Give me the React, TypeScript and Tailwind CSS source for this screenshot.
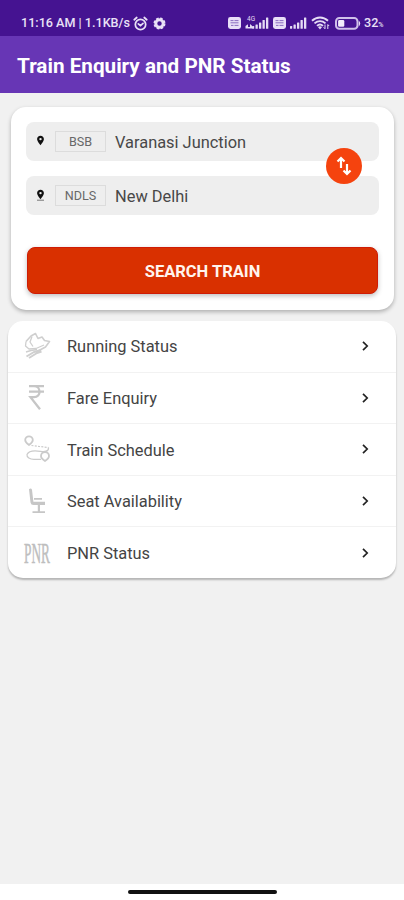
import React, { useState } from "react";

type Station = { code: string; name: string };

// ── Status bar icons ──

function AlarmIcon() {
  return (
    <svg width="15" height="15" viewBox="0 0 24 24" fill="none" stroke="currentColor" strokeWidth="2.8" strokeLinecap="round">
      <circle cx="12" cy="13.5" r="8.3" />
      <path d="M2 6l4-3.6M22 6l-4-3.6M8.5 12.5l3.5 2.8 4-3.6" />
    </svg>
  );
}

function GearIcon() {
  return (
    <svg width="13" height="13" viewBox="0 0 24 24" fill="none" stroke="currentColor">
      <circle cx="12" cy="12" r="6.8" strokeWidth="5.4" />
      <circle cx="12" cy="12" r="9.8" strokeWidth="2.6" strokeDasharray="4.9 2.8" />
    </svg>
  );
}

function VolteIcon() {
  return (
    <svg width="13" height="12" viewBox="0 0 13 12">
      <rect width="13" height="12" rx="2.4" fill="#e8dff7" />
      <path d="M2.5 3.6h3M6.5 3.6h4M2.5 5.8h8M3 8.4h2.5M6.5 8.4h4" stroke="#8a6dc0" strokeWidth="1" />
    </svg>
  );
}

function SignalIcon({ network }: { network?: string }) {
  return (
    <svg width={network ? 25 : 19} height="14" viewBox={network ? "0 0 25 14" : "6 0 19 14"} fill="#e5dcf5">
      {network && (
        <>
          <text x="2" y="5.2" fontSize="6.5" fontFamily="Roboto, sans-serif">{network}</text>
          <path d="M.5 12.5V10l2.5-1.8V11h2V8l2 1.8v2.7z" />
        </>
      )}
      <rect x="7" y="10" width="2.2" height="2.8" rx=".5" />
      <rect x="10.5" y="8.5" width="2.3" height="4.3" rx=".5" />
      <rect x="14" y="6.5" width="2.3" height="6.3" rx=".5" />
      <rect x="17.5" y="4" width="2.3" height="8.8" rx=".5" />
      <rect x="21" y="1.5" width="2.3" height="11.3" rx=".5" />
    </svg>
  );
}

function WifiIcon() {
  return (
    <svg width="19" height="14" viewBox="0 0 19 14" fill="none" stroke="#e5dcf5" strokeWidth="1.9">
      <path d="M1 4.8C5.7.4 12.3.4 17 4.8M3.5 7.4c3.3-3 7.7-3 11 0M6 9.9c1.8-1.6 4.2-1.6 6 0" />
      <path d="M9 13.4L6.9 11q2.1-1.5 4.2 0z" fill="#e5dcf5" stroke="none" />
      <path d="M14 8.5v4.2M12.6 11.3l1.4 1.5M16.8 13V8.6M18.1 10l-1.3-1.5" strokeWidth="1" />
    </svg>
  );
}

function BatteryIcon() {
  return (
    <svg width="26" height="13" viewBox="0 0 26 13">
      <rect x="1" y="1" width="21.5" height="10.8" rx="3.4" fill="none" stroke="#cfc0ea" strokeWidth="2" />
      <rect x="3.1" y="3" width="6.2" height="6.8" rx="1.3" fill="#f3edfc" />
      <path d="M23.8 3.4q2.8 3 0 6z" fill="#e5dcf5" />
    </svg>
  );
}

function StatusBar() {
  return (
    <div className="flex h-9 shrink-0 bg-[#451391] pl-[21px] pr-5 pt-[10px] text-[#e9e1f6]">
      <div className="flex h-[26px] items-center">
        <span className="w-[109px] whitespace-nowrap pt-px text-[12.6px] font-medium">11:16 AM | 1.1KB/s</span>
        <span className="ml-[3px]"><AlarmIcon /></span>
        <span className="ml-[5px]"><GearIcon /></span>
      </div>
      <div className="ml-auto flex h-[26px] items-center">
        <VolteIcon />
        <span className="ml-[4px]"><SignalIcon network="4G" /></span>
        <span className="ml-[3px]"><VolteIcon /></span>
        <span className="ml-[3px]"><SignalIcon /></span>
        <span className="ml-[3px]"><WifiIcon /></span>
        <span className="ml-[5px]"><BatteryIcon /></span>
        <span className="ml-[3px] w-[20px] whitespace-nowrap pt-px text-[12.6px] font-medium">32<span className="text-[7px]">%</span></span>
      </div>
    </div>
  );
}

// ── Search card ──

function PinIcon({ underline }: { underline?: boolean }) {
  return (
    <svg width="9" height="12" viewBox="0 0 9 12" className="shrink-0">
      <path
        fillRule="evenodd"
        d="M4.5.8C2.5.8 1.1 2.2 1.1 4.1c0 2.3 3.4 6.1 3.4 6.1s3.4-3.8 3.4-6.1C7.9 2.2 6.5.8 4.5.8zm0 2.1a1.2 1.2 0 110 2.4 1.2 1.2 0 010-2.4z"
        fill="#111"
      />
      {underline && <path d="M1 11.2h7" stroke="#777" strokeWidth="1" />}
    </svg>
  );
}

function StationRow({ station, underline }: { station: Station; underline?: boolean }) {
  return (
    <div className="flex h-[38.5px] items-center rounded-lg bg-[#eee] pl-[10px]">
      <PinIcon underline={underline} />
      <span className="ml-[10px] flex h-[21px] w-[51px] items-center justify-center border border-[#dcdcdc] pt-[2px] text-[12.6px] text-[#686868]">
        {station.code}
      </span>
      <span className="ml-[9px] pt-[3px] text-[16.4px] leading-5 text-[#484848]">{station.name}</span>
    </div>
  );
}

function SearchCard() {
  const [stations, setStations] = useState<Station[]>([
    { code: "BSB", name: "Varanasi Junction" },
    { code: "NDLS", name: "New Delhi" },
  ]);

  return (
    <div className="ml-[11px] mr-[10px] h-[203px] rounded-[15px] bg-white px-[15px] pt-[15px] shadow-[0_2px_4px_rgba(0,0,0,0.28)]">
      <div className="relative space-y-[15.5px]">
        <StationRow station={stations[0]} />
        <StationRow station={stations[1]} underline />
        <button
          onClick={() => setStations([stations[1], stations[0]])}
          aria-label="Swap stations"
          className="absolute right-[17px] top-[26px] flex size-9 items-center justify-center rounded-full bg-[#f5430e]"
        >
          <svg width="16" height="20" viewBox="0 0 16 20" fill="none" stroke="#fff" strokeWidth="2.2">
            <path d="M5 12V3M1.5 5.5L5 2l3.5 3.5M11 8v9M7.5 14.5L11 18l3.5-3.5" />
          </svg>
        </button>
      </div>
      <button className="ml-px mt-[32.5px] flex h-[47px] w-[351px] items-center justify-center rounded-lg border border-[#cf1c05] bg-[#d93000] pt-[3px] text-[16.5px] font-bold text-[#fff4ee] shadow-[0_2px_5px_rgba(0,0,0,0.25)]">
        SEARCH TRAIN
      </button>
    </div>
  );
}

// ── Menu ──

function TrainIcon() {
  return (
    <svg width="28" height="28" viewBox="0 0 28 28" fill="none" stroke="#cfcfcf" strokeWidth="1.6" strokeLinejoin="round">
      <path d="M3 9.5L8 4l4.5-2.5 2.5 5 4-1.5 2.5 3.5 5 1-4 5.5-6.5 3.5" />
      <path d="M3 9.5l-.5 4.5 3.5 3 7-.5 8-3.5M9 4.5L7 10l3 4.5" strokeWidth="1.3" />
      <path d="M3 20l5-1.5 6-1" strokeWidth="1.6" />
      <path d="M3.5 24.5L11 20l7-2M6 26l8-5 4.5-1.5" strokeWidth="2" />
    </svg>
  );
}

function RupeeIcon() {
  return (
    <svg width="28" height="28" viewBox="0 0 28 28" fill="none" stroke="#c6c6c6" strokeWidth="2.3">
      <path d="M6 2.2h15M6 7.6h15M6.5 2.2H11c7.4 0 7.4 11 0 11H7.5l9.5 12" />
    </svg>
  );
}

function RouteIcon() {
  return (
    <svg width="28" height="28" viewBox="0 0 28 28" fill="none" stroke="#cbcbcb" strokeWidth="1.8">
      <path d="M6 10S2.2 7.5 2.2 5.1a3.8 3.8 0 017.6 0C9.8 7.5 6 10 6 10z" />
      <path d="M8.5 10.5l8 1 9 1" strokeDasharray="2 1.3" strokeWidth="1.2" />
      <path d="M25.5 12.5c.5 4-4 4.5-8 3.8-6-1-12-.3-13.5 3.2-.5 3 3 4.8 7 4.8h7" strokeWidth="1.2" />
      <path d="M22 26s-4-2.6-4-5a4 4 0 018 0c0 2.4-4 5-4 5z" />
    </svg>
  );
}

function SeatIcon() {
  return (
    <svg width="28" height="28" viewBox="0 0 28 28" fill="#c6c6c6">
      <path d="M6 2.2q2-1.5 3 .5l1.4 12.1H22v3.2H10.5q-2.6 0-3-2.6z" />
      <path d="M11 11h8v1.7h-8zM14.8 18h2.2v6.5h-2.2zM9.5 24.3h12.5V26H9.5z" />
    </svg>
  );
}

function PnrIcon() {
  return (
    <svg width="28" height="36" viewBox="0 0 28 36" fill="#bebebe" stroke="#bebebe" strokeWidth="0.5">
      <text transform="translate(1 27.5) scale(0.46 1)" fontSize="29" fontFamily="'Liberation Serif', serif">PNR</text>
    </svg>
  );
}

const MENU = [
  { label: "Running Status", icon: <TrainIcon /> },
  { label: "Fare Enquiry", icon: <RupeeIcon /> },
  { label: "Train Schedule", icon: <RouteIcon /> },
  { label: "Seat Availability", icon: <SeatIcon /> },
  { label: "PNR Status", icon: <PnrIcon /> },
];

function MenuCard() {
  return (
    <div className="ml-2 mr-2 mt-[11px] h-[257px] rounded-[15px] bg-white shadow-[0_2px_2px_rgba(0,0,0,0.25)]">
      {MENU.map((item) => (
        <div
          key={item.label}
          className="flex h-[51.6px] items-center border-b border-[#f2f2f2] pl-[15px] pr-[26px] last:h-[50.6px] last:border-b-0"
        >
          {item.icon}
          <span className="ml-4 pt-[3px] text-[16.4px] text-[#444]">{item.label}</span>
          <svg width="10" height="12" viewBox="0 0 10 12" fill="none" stroke="#222" strokeWidth="1.7" className="ml-auto">
            <path d="M3 1.8L7.2 6 3 10.2" />
          </svg>
        </div>
      ))}
    </div>
  );
}

export default function App() {
  return (
    <div className="flex h-[900px] w-[404px] flex-col overflow-hidden bg-[#f1f1f1] font-[Roboto,sans-serif]">
      <StatusBar />
      <header className="flex h-[57px] shrink-0 items-center bg-[#6736b5] pl-[17px] pt-[4px]">
        <h1 className="whitespace-nowrap text-[20.7px] font-bold text-white">Train Enquiry and PNR Status</h1>
      </header>
      <main className="flex-1 pt-[14px]">
        <SearchCard />
        <MenuCard />
      </main>
      <div className="flex h-4 shrink-0 justify-center bg-white pt-[6px]">
        <div className="h-1 w-[149px] rounded-full bg-[#111]" />
      </div>
    </div>
  );
}
